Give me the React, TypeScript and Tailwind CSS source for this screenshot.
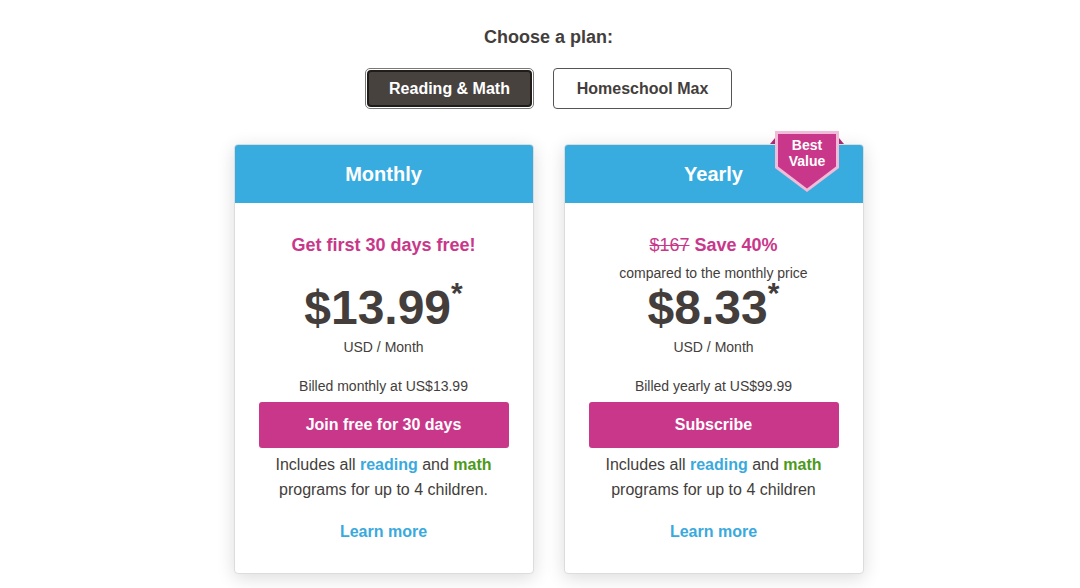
import React from 'react';

const font = { fontFamily: '"Liberation Sans", Arial, sans-serif' };

function BestValue() {
  return (
    <svg className="absolute -top-[14px] right-[19px]" width="74" height="61" viewBox="0 0 74 61">
      <polygon points="5,7 5,13 0,13" fill="#a82a72" />
      <polygon points="69,7 69,13 74,13" fill="#a82a72" />
      <polygon points="5,0 69,0 69,37 37,61 5,37" fill="#f0bcd9" />
      <polygon points="8,3 66,3 66,35.5 37,57.5 8,35.5" fill="#c9378a" />
      <text x="37" y="19" textAnchor="middle" fill="#fff" fontSize="14" fontWeight="700" fontFamily="Liberation Sans, Arial, sans-serif">Best</text>
      <text x="37" y="35" textAnchor="middle" fill="#fff" fontSize="14" fontWeight="700" fontFamily="Liberation Sans, Arial, sans-serif">Value</text>
    </svg>
  );
}

interface PlanProps {
  title: string;
  price: string;
  billed: string;
  cta: string;
  period: string;
  yearly?: boolean;
}

function Price({ value }: { value: string }) {
  return (
    <div className="flex h-[48px] items-start text-[48px] font-bold leading-[48px]">
      <span>{value}</span>
      <span className="text-[30px] leading-[18px]">*</span>
    </div>
  );
}

function PlanCard({ title, price, billed, cta, period, yearly }: PlanProps) {
  return (
    <div className="relative w-[300px] rounded-[4px] border border-[#dcdcdc] bg-white shadow-[0_4px_18px_rgba(0,0,0,0.14)]">
      <div className="flex h-[58px] items-center justify-center rounded-t-[3px] bg-[#38acdf] text-[20px] font-bold text-white">
        {title}
      </div>
      {yearly && <BestValue />}
      <div className="flex flex-col items-center px-6 pb-[31px] text-[#433e3b]">
        {yearly ? (
          <>
            <div className="mt-[31px] h-[22px] text-[18px] font-bold leading-[22px] text-[#c9378a]">
              <span className="font-normal line-through">$167</span> Save 40%
            </div>
            <div className="mt-[9px] h-[16px] text-[14px] leading-[16px]">compared to the monthly price</div>
            <div className="mt-[3px]">
              <Price value={price} />
            </div>
          </>
        ) : (
          <>
            <div className="mt-[31px] h-[22px] text-[18px] font-bold leading-[22px] text-[#c9378a]">
              Get first 30 days free!
            </div>
            <div className="mt-[28px]">
              <Price value={price} />
            </div>
          </>
        )}
        <div className="mt-[6px] text-[14px] leading-[18px]">{period}</div>
        <div className="mt-[21px] text-[14px] leading-[18px]">{billed}</div>
        <button className="mt-[7px] flex h-[46px] w-[250px] items-center justify-center rounded-[3px] bg-[#c9378a] text-[16px] font-bold text-white">
          {cta}
        </button>
        <p className="mt-[4px] text-center text-[16px] leading-[25px]">
          Includes all <span className="font-bold text-[#3aa9dd]">reading</span> and{' '}
          <span className="font-bold text-[#4c9a1c]">math</span>
          <br />
          programs for up to 4 children{yearly ? '' : '.'}
        </p>
        <a className="mt-[20px] text-[16px] font-bold leading-[20px] text-[#3aa9dd]">Learn more</a>
      </div>
    </div>
  );
}

export default function App() {
  return (
    <div className="min-h-[588px] w-full bg-white" style={font}>
      <div className="flex flex-col items-center pl-[17px] pt-[26px]">
        <h2 className="text-[18px] font-bold leading-[22px] text-[#433e3b]">Choose a plan:</h2>
        <div className="mt-[20px] flex gap-[19px]">
          <button className="h-[41px] w-[169px] rounded-[5px] border border-[#777] p-[1px]">
            <span className="flex h-full w-full items-center justify-center rounded-[4px] border-2 border-[#1f1c1a] bg-[#48423f] text-[16px] font-bold text-white">
              Reading &amp; Math
            </span>
          </button>
          <button className="flex h-[41px] w-[179px] items-center justify-center rounded-[4px] border border-[#555] bg-white text-[16px] font-bold text-[#433e3b]">
            Homeschool Max
          </button>
        </div>
        <div className="mt-[35px] flex gap-[30px]">
          <PlanCard
            title="Monthly"
            price="$13.99"
            period="USD / Month"
            billed="Billed monthly at US$13.99"
            cta="Join free for 30 days"
          />
          <PlanCard
            title="Yearly"
            price="$8.33"
            period="USD / Month"
            billed="Billed yearly at US$99.99"
            cta="Subscribe"
            yearly
          />
        </div>
      </div>
    </div>
  );
}
